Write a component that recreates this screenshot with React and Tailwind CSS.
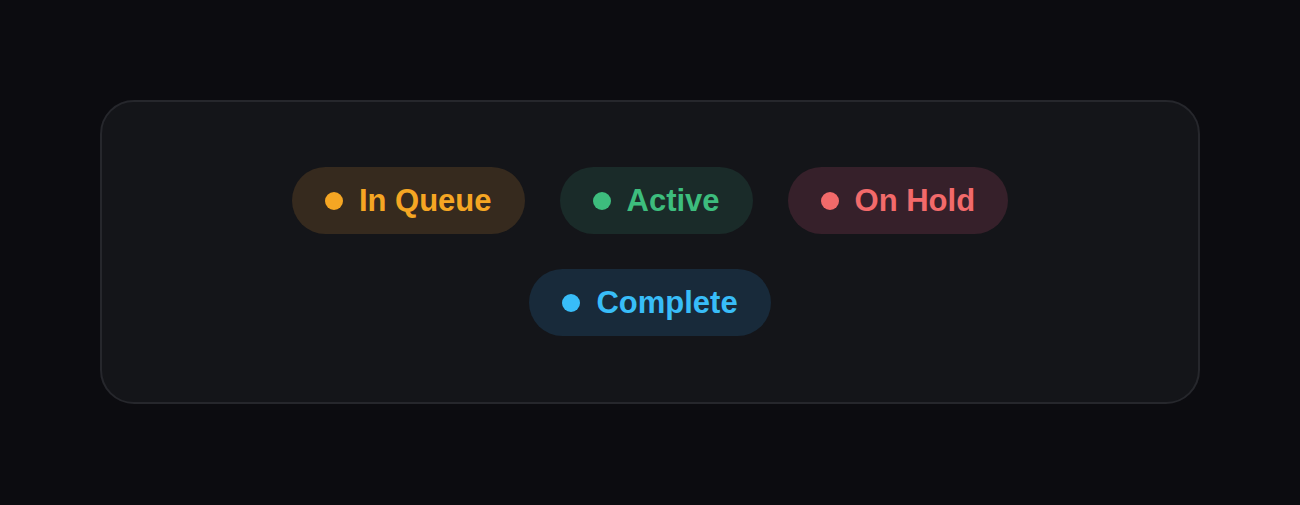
import React from 'react';

const statuses = [
  { label: 'In Queue', pill: 'bg-[#362a1e]', dot: 'bg-[#f5a623]', text: 'text-[#f5a623]' },
  { label: 'Active', pill: 'bg-[#1a2b29]', dot: 'bg-[#3dbd7d]', text: 'text-[#3dbd7d]' },
  { label: 'On Hold', pill: 'bg-[#36202a]', dot: 'bg-[#f26a6a]', text: 'text-[#f26a6a]' },
  { label: 'Complete', pill: 'bg-[#182a3a]', dot: 'bg-[#38bdf8]', text: 'text-[#38bdf8]' },
];

function StatusPill({ label, pill, dot, text }) {
  return (
    <span className={`flex items-center gap-4 h-[67px] px-[33px] rounded-full ${pill}`}>
      <span className={`w-[18px] h-[18px] rounded-full shrink-0 ${dot}`} />
      <span className={`${text} text-[31px] font-bold leading-none`}>{label}</span>
    </span>
  );
}

export default function App() {
  return (
    <div
      className="min-h-screen bg-[#0c0c10] pt-[100px]"
      style={{ fontFamily: '"Liberation Sans", Arial, sans-serif' }}
    >
      <div className="mx-auto w-[1100px] bg-[#141519] border-2 border-[#26272c] rounded-[34px] px-[64px] pt-[65px] pb-[66px]">
        <div className="flex flex-wrap justify-center gap-[35px]">
          {statuses.map((s) => (
            <StatusPill key={s.label} {...s} />
          ))}
        </div>
      </div>
    </div>
  );
}
